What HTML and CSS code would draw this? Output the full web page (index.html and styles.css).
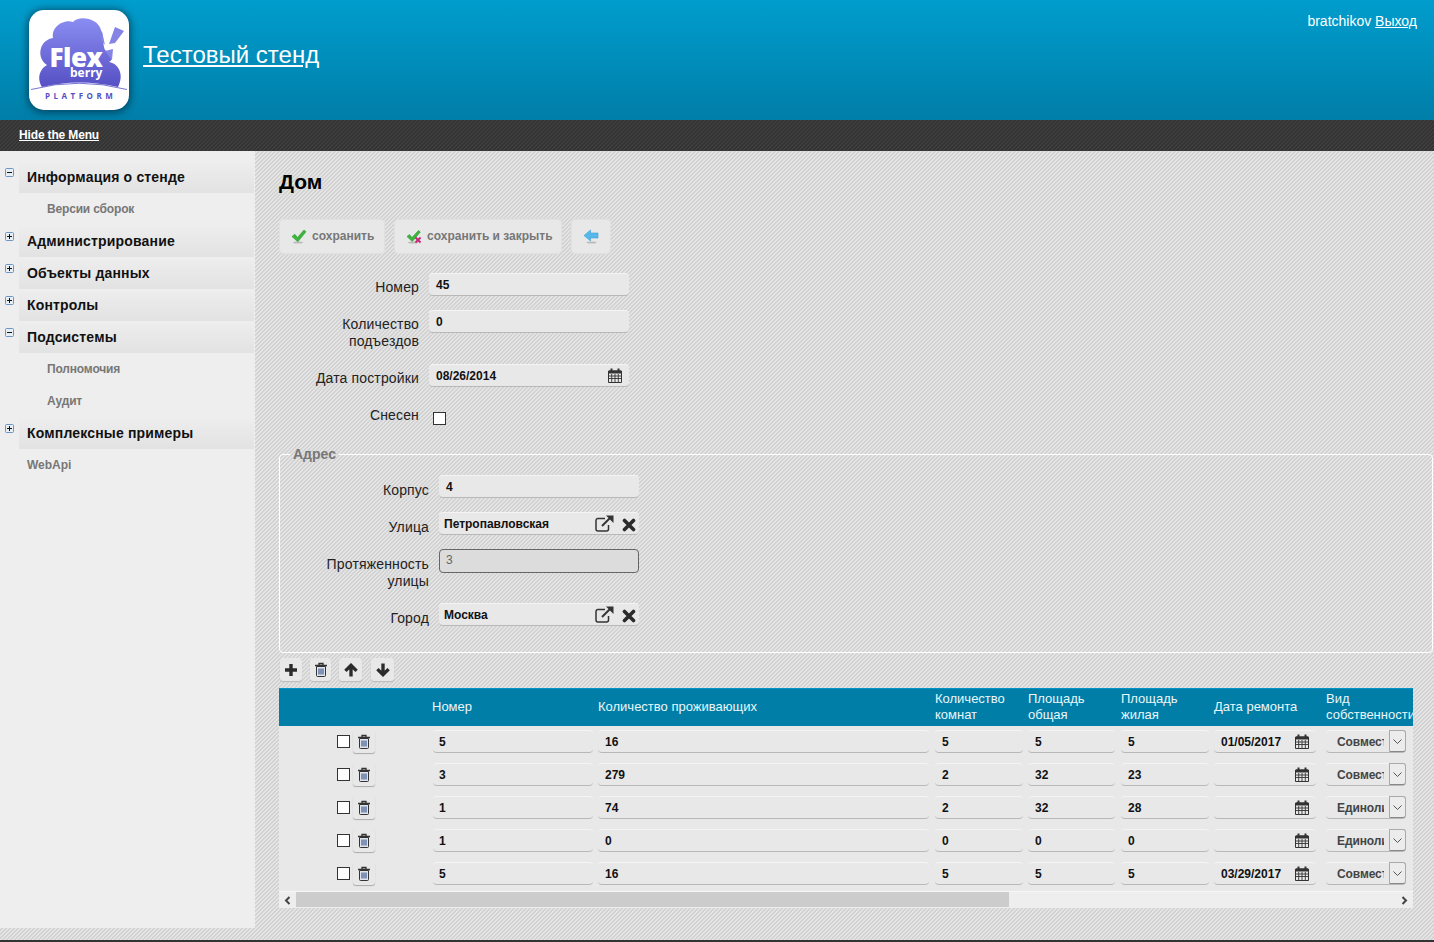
FILE: index.html
```html
<!DOCTYPE html>
<html lang="ru">
<head>
<meta charset="utf-8">
<title>Дом</title>
<link rel="stylesheet" href="styles.css">
</head>
<body>
<svg class="defs" width="0" height="0" aria-hidden="true">
  <defs>
    <linearGradient id="cloudFill" x1="0" y1="0" x2="0" y2="1"><stop offset="0" stop-color="#8b8df2"/><stop offset="1" stop-color="#5650c4"/></linearGradient>
    <symbol id="i-cal" viewBox="0 0 14 15"><path d="M.5 3h13v11.5H.5z" fill="#e8e8e8" stroke="#333"/><path d="M1 2.5h12v3H1z" fill="#333"/><path d="M3.5 .5v3M10.5 .5v3" stroke="#333" stroke-width="2"/><path d="M.5 8h13M.5 10.500h13M3.700 6v8M7 6v8M10.300 6v8" stroke="#333" stroke-width=".9"/></symbol>
    <symbol id="i-trash" viewBox="0 0 14 15"><path d="M2.500 4.500h9v9a1 1 0 0 1-1 1h-7a1 1 0 0 1-1-1z" fill="#dfe3ea" stroke="#333"/><path d="M1 3.500h12M5 3V1.500h4V3" fill="none" stroke="#333" stroke-width="1.300"/><path d="M5 6.500v6M7 6.500v6M9 6.500v6" stroke="#30508a" stroke-width="1.100"/></symbol>
    <symbol id="i-x" viewBox="0 0 14 14"><path d="M2.500 2.500l9 9M11.500 2.500l-9 9" stroke="#2b2b2b" stroke-width="3.600" stroke-linecap="round"/></symbol>
    <symbol id="i-ext" viewBox="0 0 19 17"><path d="M10 3.500H3A2 2 0 0 0 1 5.500v8.500a2 2 0 0 0 2 2h8.500a2 2 0 0 0 2-2v-4" fill="none" stroke="#333" stroke-width="1.500"/><path d="M7 11L15.500 2.500" stroke="#333" stroke-width="2"/><path d="M11 .5h7.500v7.500z" fill="#333"/></symbol>
    <symbol id="i-plus" viewBox="0 0 14 14"><path d="M7 1v12M1 7h12" stroke="#2b2b2b" stroke-width="3.400"/></symbol>
    <symbol id="i-up" viewBox="0 0 15 14"><path d="M1.500 8l6-6 6 6M7.500 3v11" fill="none" stroke="#2b2b2b" stroke-width="3.600"/></symbol>
    <symbol id="i-down" viewBox="0 0 15 14"><path d="M1.500 6l6 6 6-6M7.500 11V0" fill="none" stroke="#2b2b2b" stroke-width="3.600"/></symbol>
    <symbol id="i-check" viewBox="0 0 16 15"><ellipse cx="7" cy="13.500" rx="5" ry="1" fill="#bbb"/><path d="M1 7.500L3.800 5.200l2.700 3.300L13 1l2 1.700L6.800 12.800z" fill="#3cb53c" stroke="#2b9a2b" stroke-width=".6"/></symbol>
    <symbol id="i-check2" viewBox="0 0 16 15"><ellipse cx="7" cy="13.500" rx="5" ry="1" fill="#bbb"/><path d="M1 7.500L3.500 5.500l2.500 3L12.500 1.500l1.800 1.500L6.300 12.500z" fill="#3cb53c" stroke="#2b9a2b" stroke-width=".6"/><path d="M9.500 8.500l5 5M14.500 8.500l-5 5" stroke="#c8287a" stroke-width="2"/></symbol>
    <symbol id="i-back" viewBox="0 0 15 15"><ellipse cx="8" cy="13.500" rx="5" ry="1" fill="#bbb"/><path d="M.5 6.500L7 1v3h7.500v5H7v3z" fill="#56b9ea" stroke="#3a9fd6" stroke-width=".6"/></symbol>
    <symbol id="i-minus" viewBox="0 0 9 9"><rect x=".5" y=".5" width="8" height="8" rx="1" fill="#e8eef6" stroke="#6d94c2"/><path d="M2 4.500h5" stroke="#111"/></symbol>
    <symbol id="i-more" viewBox="0 0 9 9"><rect x=".5" y=".5" width="8" height="8" rx="1" fill="#e8eef6" stroke="#6d94c2"/><path d="M2 4.500h5M4.500 2v5" stroke="#111"/></symbol>
  </defs>
</svg>

<header class="top">
  <svg class="logo" viewBox="0 0 100 100" role="img" aria-label="Flexberry Platform">
    <path d="M13 77C7 67 12 58 18 55 7 48 10 30 24 28 22 16 36 9 44 12 50 5 69 8 72 20 76 28 73 33 76 40 83 44 85 50 80 52 91 54 95 66 89 77Q50 68 13 77Z" fill="url(#cloudFill)"/>
    <path d="M2 79.500Q50 67 98 79.500" fill="none" stroke="#5650c4" stroke-width=".8"/>
    <path d="M86 17l9 4-9 12-6 1zM73 22l3 13-4-5zM84 39l-8 2 7 9z" fill="#8583e4"/>
    <text class="logo-flex" x="20.500" y="56.500">Flex</text>
    <text class="logo-berry" x="41" y="67">berry</text>
    <text class="logo-platform" x="16" y="88.500">PLATFORM</text>
  </svg>
  <a class="site-title" href="#">Тестовый стенд</a>
  <div class="user">bratchikov <a href="#">Выход</a></div>
</header>

<nav class="menu-bar"><a href="#">Hide the Menu</a></nav>

<div class="page">
  <aside class="side">
    <div class="tree-row"><svg class="tog"><use href="#i-minus"/></svg><div class="tree-head">Информация о стенде</div></div>
    <div class="tree-sub">Версии сборок</div>
    <div class="tree-row"><svg class="tog"><use href="#i-more"/></svg><div class="tree-head">Администрирование</div></div>
    <div class="tree-row"><svg class="tog"><use href="#i-more"/></svg><div class="tree-head">Объекты данных</div></div>
    <div class="tree-row"><svg class="tog"><use href="#i-more"/></svg><div class="tree-head">Контролы</div></div>
    <div class="tree-row"><svg class="tog"><use href="#i-minus"/></svg><div class="tree-head">Подсистемы</div></div>
    <div class="tree-sub">Полномочия</div>
    <div class="tree-sub">Аудит</div>
    <div class="tree-row"><svg class="tog"><use href="#i-more"/></svg><div class="tree-head">Комплексные примеры</div></div>
    <div class="tree-leaf">WebApi</div>
  </aside>

  <main class="content">
    <h1>Дом</h1>
    <div class="actions">
      <button class="btn btn-save"><svg class="ic16"><use href="#i-check"/></svg>сохранить</button>
      <button class="btn btn-close"><svg class="ic16"><use href="#i-check2"/></svg>сохранить и закрыть</button>
      <button class="btn btn-back"><svg class="ic16"><use href="#i-back"/></svg></button>
    </div>

    <div class="row"><label>Номер</label><div class="field">45</div></div>
    <div class="row"><label>Количество подъездов</label><div class="field">0</div></div>
    <div class="row"><label>Дата постройки</label><div class="field"><span class="val">08/26/2014</span><svg class="cal"><use href="#i-cal"/></svg></div></div>
    <div class="row"><label>Снесен</label><span class="check check-form"></span></div>

    <fieldset class="addr">
      <legend>Адрес</legend>
      <div class="row"><label>Корпус</label><div class="field">4</div></div>
      <div class="row"><label>Улица</label><div class="field field-lookup"><span class="val">Петропавловская</span><svg class="ext"><use href="#i-ext"/></svg><svg class="xx"><use href="#i-x"/></svg></div></div>
      <div class="row"><label>Протяженность улицы</label><div class="field field-off">3</div></div>
      <div class="row"><label>Город</label><div class="field field-lookup"><span class="val">Москва</span><svg class="ext"><use href="#i-ext"/></svg><svg class="xx"><use href="#i-x"/></svg></div></div>
    </fieldset>

    <div class="tools">
      <button class="tool"><svg class="ic14"><use href="#i-plus"/></svg></button>
      <button class="tool tool-n"><svg class="ic-t"><use href="#i-trash"/></svg></button>
      <button class="tool tool-a"><svg class="ic14"><use href="#i-up"/></svg></button>
      <button class="tool tool-a"><svg class="ic14"><use href="#i-down"/></svg></button>
    </div>

    <div class="grid">
      <div class="g-head">
        <div></div>
        <div class="shift">Номер</div>
        <div>Количество проживающих</div>
        <div>Количество комнат</div>
        <div>Площадь общая</div>
        <div>Площадь жилая</div>
        <div>Дата ремонта</div>
        <div>Вид собственности</div>
      </div>

      <div class="g-row">
        <div class="g-ctl"><span class="check"></span><button class="tool tool-row"><svg class="ic-t"><use href="#i-trash"/></svg></button></div>
        <div class="cell c1">5</div><div class="cell c2">16</div><div class="cell c3">5</div><div class="cell c4">5</div><div class="cell c3">5</div>
        <div class="cell c5"><span class="val">01/05/2017</span><svg class="cal"><use href="#i-cal"/></svg></div>
        <div class="sel"><span class="sel-t">Совместная</span><span class="sel-b"><svg viewBox="0 0 9 5"><path d="M.5.5l4 4 4-4" fill="none" stroke="#555"/></svg></span></div>
      </div>
      <div class="g-row">
        <div class="g-ctl"><span class="check"></span><button class="tool tool-row"><svg class="ic-t"><use href="#i-trash"/></svg></button></div>
        <div class="cell c1">3</div><div class="cell c2">279</div><div class="cell c3">2</div><div class="cell c4">32</div><div class="cell c3">23</div>
        <div class="cell c5"><span class="val"></span><svg class="cal"><use href="#i-cal"/></svg></div>
        <div class="sel"><span class="sel-t">Совместная</span><span class="sel-b"><svg viewBox="0 0 9 5"><path d="M.5.5l4 4 4-4" fill="none" stroke="#555"/></svg></span></div>
      </div>
      <div class="g-row">
        <div class="g-ctl"><span class="check"></span><button class="tool tool-row"><svg class="ic-t"><use href="#i-trash"/></svg></button></div>
        <div class="cell c1">1</div><div class="cell c2">74</div><div class="cell c3">2</div><div class="cell c4">32</div><div class="cell c3">28</div>
        <div class="cell c5"><span class="val"></span><svg class="cal"><use href="#i-cal"/></svg></div>
        <div class="sel"><span class="sel-t">Единоличная</span><span class="sel-b"><svg viewBox="0 0 9 5"><path d="M.5.5l4 4 4-4" fill="none" stroke="#555"/></svg></span></div>
      </div>
      <div class="g-row">
        <div class="g-ctl"><span class="check"></span><button class="tool tool-row"><svg class="ic-t"><use href="#i-trash"/></svg></button></div>
        <div class="cell c1">1</div><div class="cell c2">0</div><div class="cell c3">0</div><div class="cell c4">0</div><div class="cell c3">0</div>
        <div class="cell c5"><span class="val"></span><svg class="cal"><use href="#i-cal"/></svg></div>
        <div class="sel"><span class="sel-t">Единоличная</span><span class="sel-b"><svg viewBox="0 0 9 5"><path d="M.5.5l4 4 4-4" fill="none" stroke="#555"/></svg></span></div>
      </div>
      <div class="g-row">
        <div class="g-ctl"><span class="check"></span><button class="tool tool-row"><svg class="ic-t"><use href="#i-trash"/></svg></button></div>
        <div class="cell c1">5</div><div class="cell c2">16</div><div class="cell c3">5</div><div class="cell c4">5</div><div class="cell c3">5</div>
        <div class="cell c5"><span class="val">03/29/2017</span><svg class="cal"><use href="#i-cal"/></svg></div>
        <div class="sel"><span class="sel-t">Совместная</span><span class="sel-b"><svg viewBox="0 0 9 5"><path d="M.5.5l4 4 4-4" fill="none" stroke="#555"/></svg></span></div>
      </div>

      <div class="scroll">
        <span class="sb-btn"><svg viewBox="0 0 7 9"><path d="M5.500 1l-3.500 3.500 3.500 3.500" fill="none" stroke="#444" stroke-width="2"/></svg></span>
        <span class="sb-thumb"></span>
        <span class="sb-track"></span>
        <span class="sb-btn"><svg viewBox="0 0 7 9"><path d="M1.500 1l3.500 3.500-3.500 3.500" fill="none" stroke="#444" stroke-width="2"/></svg></span>
      </div>
    </div>
  </main>
</div>
<footer class="foot"></footer>
</body>
</html>
```
FILE: styles.css
```css
* { box-sizing: border-box; }
html, body { height: 100%; }
body {
  margin: 0;
  height: 942px;
  overflow: hidden;
  display: flex;
  flex-direction: column;
  font-family: "Liberation Sans", Arial, sans-serif;
  font-size: 14px;
  color: #000;
  background: #dcdcdc;
}
.defs { display: block; height: 0; }

.top {
  flex: 0 0 120px;
  display: flex;
  align-items: flex-start;
  background: linear-gradient(#009dcd, #007ea8);
  color: #fff;
}
.logo {
  flex: none;
  width: 100px;
  height: 100px;
  margin: 10px 0 0 29px;
  background: #fff;
  border-radius: 15px;
  box-shadow: 0 1px 7px 2px rgba(0, 40, 60, .6);
}
.logo-flex { font: 800 26px "Open Sans", sans-serif; fill: #fff; letter-spacing: -.5px; }
.logo-berry { font: 700 12px "Open Sans", sans-serif; fill: #fff; }
.logo-platform { font: 700 8px "Open Sans", sans-serif; fill: #5650c4; letter-spacing: 3.500px; }
.site-title {
  margin: 40px 0 0 14px;
  font-size: 24px;
  line-height: 29px;
  color: #fff;
}
.user {
  margin: 13px 17px 0 auto;
  font-size: 14px;
  line-height: 16px;
}
.user a { color: #fff; }

.menu-bar {
  flex: 0 0 31px;
  padding: 8px 0 0 19px;
  font-size: 12px;
  line-height: 14px;
  font-weight: 700;
  letter-spacing: -.15px;
  background-color: #333;
  background-image: linear-gradient(135deg, #3e3e3e 25%, transparent 25%, transparent 50%, #3e3e3e 50%, #3e3e3e 75%, transparent 75%);
  background-size: 4px 4px;
}
.menu-bar a { color: #fff; }

.page {
  flex: 1;
  display: flex;
  align-items: flex-start;
  min-height: 0;
  background-color: #d2d2d2;
  background-image: linear-gradient(135deg, #e4e4e4 25%, transparent 25%, transparent 50%, #e4e4e4 50%, #e4e4e4 75%, transparent 75%);
  background-size: 4px 4px;
}
.side {
  flex: 0 0 255px;
  height: 777px;
  padding-top: 10px;
  background: #eee;
}
.tree-row { display: flex; height: 32px; }
.tog { flex: none; width: 9px; height: 9px; margin: 7px 5px 0 5px; }
.tree-head {
  flex: 1;
  margin-right: 1px;
  padding-left: 8px;
  line-height: 32px;
  font-size: 14px;
  font-weight: 700;
  letter-spacing: .17px;
  color: #111;
  background: linear-gradient(#eee, #e2e2e2);
}
.tree-sub, .tree-leaf {
  height: 32px;
  line-height: 32px;
  font-size: 12px;
  font-weight: 700;
  color: #777;
}
.tree-sub { padding-left: 47px; letter-spacing: -.17px; }
.tree-leaf { padding-left: 27px; }

.content { flex: 1; min-width: 0; padding: 19px 0 0 24px; }
h1 {
  margin: 0;
  font-size: 21px;
  line-height: 24px;
  font-weight: 700;
}
.actions { display: flex; gap: 9px; margin-top: 25px; margin-bottom: 19px; }
.btn {
  display: flex;
  align-items: center;
  gap: 5px;
  height: 35px;
  padding: 0 0 1px 11px;
  border: 1px solid #e0e0e0;
  border-radius: 4px;
  background: #e8e8e8;
  font: 700 12px "Liberation Sans", Arial, sans-serif;
  color: #777;
}
.btn-save { width: 106px; }
.btn-close { width: 168px; }
.btn-back { width: 40px; padding-left: 11px; }
.ic16 { flex: none; width: 16px; height: 15px; }
.ic14 { flex: none; width: 14px; height: 14px; display: block; }
.ic-t { flex: none; width: 14px; height: 15px; display: block; margin-top: -1px; }

.row { display: flex; gap: 10px; margin-bottom: 14px; }
.row label {
  flex: none;
  width: 140px;
  padding-top: 6px;
  text-align: right;
  line-height: 17px;
  font-size: 14px;
  letter-spacing: .15px;
  color: #222;
}
.field {
  flex: none;
  display: flex;
  align-items: center;
  width: 200px;
  height: 23px;
  padding: 0 7px;
  border-radius: 4px;
  border-top: 1px solid #f4f4f4;
  border-bottom: 1px solid #b8b8b8;
  background: #e8e8e8;
  font-size: 12px;
  font-weight: 700;
  line-height: 14px;
  color: #111;
}
.val { flex: 1; min-width: 0; }
.cal { flex: none; width: 14px; height: 15px; margin-top: -1px; }
.ext { flex: none; width: 19px; height: 17px; margin-left: 4px; }
.xx { flex: none; width: 14px; height: 14px; margin-left: 8px; margin-top: 2px; }
.field-lookup { padding: 0 3px 0 5px; }
.field-off {
  height: 24px;
  padding: 0 6px 2px;
  border: 1px solid #666;
  background: #dcdcdc;
  font-weight: 400;
  color: #666;
}
.check {
  display: block;
  flex: none;
  width: 13px;
  height: 13px;
  border: 1px solid #333;
  background: #fff;
}
.check-form { margin: 11px 0 0 4px; }

.addr {
  width: 1154px;
  height: 206px;
  margin: 22px 0 0;
  padding: 14px 0 0 9px;
  border: 1px solid #fff;
  border-radius: 4px;
}
.addr legend {
  margin-left: 1px;
  padding: 0 3px;
  font-size: 14px;
  line-height: 14px;
  font-weight: 700;
  color: #777;
}
.addr .row { margin-bottom: 13px; }
.addr .row label { padding-top: 7px; }
.tools { display: flex; margin: 5px 0 7px 1px; }
.tool {
  display: flex;
  align-items: center;
  justify-content: center;
  width: 22px;
  height: 23px;
  margin-right: 8px;
  padding: 0;
  border: 0;
  border-radius: 3px;
  background: #e8e8e8;
  box-shadow: 0 1px 1px #bbb;
}
.tool-n { width: 21px; }
.tool-a { width: 23px; margin-right: 9px; }
.tool-row { width: 22px; margin: 0 0 0 3px; box-shadow: 0 1px 1px #aaa; }

.grid { width: 1134px; overflow: hidden; background: #e8e8e8; }
.g-head, .g-row {
  display: grid;
  grid-template-columns: 154px 165px 337px 93px 93px 93px 112px 87px;
}
.g-head {
  height: 38px;
  padding-bottom: 2px;
  align-items: center;
  border-top: 1px solid #0094c4;
  background: #007ea7;
  color: #eaf6fa;
  font-size: 13px;
  line-height: 16px;
}
.shift { margin-left: -1px; }
.g-row { height: 33px; padding-top: 4px; }
.g-ctl { display: flex; justify-content: flex-end; align-items: flex-start; padding: 0 58px 0 0; }
.g-ctl .check { margin-top: 5px; }
.cell {
  display: flex;
  align-items: center;
  height: 23px;
  padding: 0 7px;
  border-radius: 4px;
  border-top: 1px solid #f4f4f4;
  border-bottom: 1px solid #b8b8b8;
  font-size: 12px;
  font-weight: 700;
  color: #111;
}
.c1 { width: 160px; padding-left: 6px; }
.c2 { width: 331px; }
.c3 { width: 88px; }
.c4 { width: 87px; }
.c5 { width: 102px; }
.sel {
  display: flex;
  width: 80px;
  height: 23px;
  border-radius: 4px;
  border-top: 1px solid #f4f4f4;
  border-bottom: 1px solid #b8b8b8;
  font-size: 12px;
  font-weight: 700;
  letter-spacing: -.1px;
  color: #444;
}
.sel-t {
  flex: 1;
  min-width: 0;
  margin: 0 5px 0 11px;
  overflow: hidden;
  white-space: nowrap;
  line-height: 23px;
}
.sel-b {
  flex: none;
  display: flex;
  align-items: center;
  justify-content: center;
  width: 17px;
  margin-top: -1px;
  border: 1px solid #aaa;
  border-bottom-color: #888;
  border-radius: 0 3px 3px 0;
  background: #ececec;
}
.sel-b svg { width: 9px; height: 5px; }

.scroll { display: flex; height: 17px; border-top: 1px solid #f6f6f6; background: #eee; }
.sb-btn { flex: none; display: flex; align-items: center; justify-content: center; width: 17px; }
.sb-btn svg { width: 7px; height: 9px; }
.sb-thumb { flex: none; width: 713px; height: 15px; background: #ccc; }
.sb-track { flex: 1; }

.foot { flex: 0 0 2px; background: #333; }
```
